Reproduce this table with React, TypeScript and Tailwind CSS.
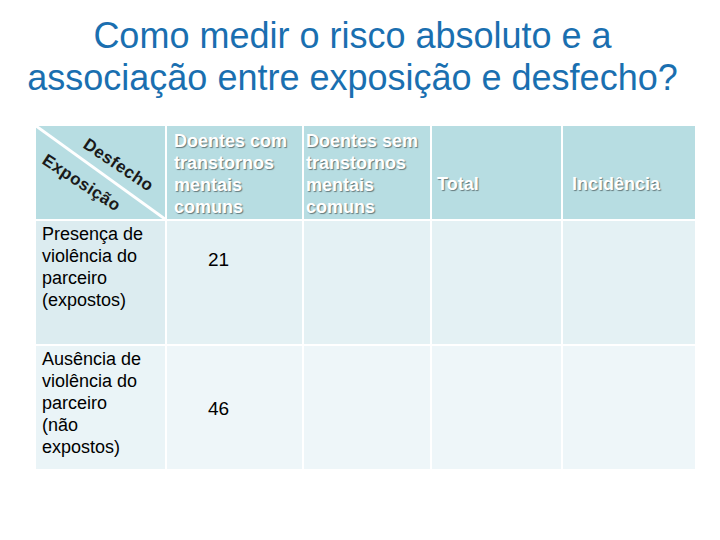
export default function App() {
  const head =
    "font-bold text-white leading-[22px] text-[18px] [text-shadow:1px_1px_1px_rgba(0,0,0,0.45)]";
  return (
    <div className="flex h-[540px] w-[720px] flex-col bg-white font-['Liberation_Sans',Arial,sans-serif]">
      <h1 className="pr-[15px] pt-[15px] text-center text-[36px] leading-[42px] text-[#1a6fb0]">
        Como medir o risco absoluto e a
        <br />
        associação entre exposição e desfecho?
      </h1>

      <div className="ml-[36px] mt-[27px] grid w-[659px] grid-cols-[129px_135px_126px_129px_132px] grid-rows-[93px_123px_123px] gap-[2px]">
        {/* diagonal corner cell */}
        <div className="relative overflow-hidden bg-[#b7dde2]">
          <svg className="absolute inset-0" width="129" height="93" viewBox="0 0 129 93">
            <line x1="0" y1="0" x2="129" y2="93" stroke="white" strokeWidth="3" />
          </svg>
          <span className="absolute left-[49px] top-[8px] origin-left rotate-[34deg] text-[17px] font-bold leading-none tracking-[0.5px] text-[#1a1a1a]">
            Desfecho
          </span>
          <span className="absolute left-[8px] top-[24px] origin-left rotate-[33deg] text-[17px] font-bold leading-none tracking-[0.5px] text-[#1a1a1a]">
            Exposição
          </span>
        </div>
        <div className={`bg-[#b7dde2] pl-[7px] pt-[4px] ${head}`}>
          Doentes com
          <br />
          transtornos
          <br />
          mentais
          <br />
          comuns
        </div>
        <div className={`bg-[#b7dde2] pl-[2px] pt-[4px] ${head}`}>
          Doentes sem
          <br />
          transtornos
          <br />
          mentais
          <br />
          comuns
        </div>
        <div className={`bg-[#b7dde2] pl-[5px] pt-[47px] ${head}`}>Total</div>
        <div className={`bg-[#b7dde2] pl-[9px] pt-[47px] ${head}`}>Incidência</div>

        {/* row 1 */}
        <div className="bg-[#dcecf0] pl-[6px] pt-[2px] text-[18px] leading-[22px] text-black">
          Presença de
          <br />
          violência do
          <br />
          parceiro
          <br />
          (expostos)
        </div>
        <div className="bg-[#e4f1f4] pl-[41px] pt-[28px] text-[19px] leading-[22px] text-black">21</div>
        <div className="bg-[#e4f1f4]" />
        <div className="bg-[#e4f1f4]" />
        <div className="bg-[#e4f1f4]" />

        {/* row 2 */}
        <div className="bg-[#eaf4f7] pl-[6px] pt-[2px] text-[18px] leading-[22px] text-black">
          Ausência de
          <br />
          violência do
          <br />
          parceiro
          <br />
          (não
          <br />
          expostos)
        </div>
        <div className="bg-[#eef6f9] pl-[41px] pt-[52px] text-[19px] leading-[22px] text-black">46</div>
        <div className="bg-[#eef6f9]" />
        <div className="bg-[#eef6f9]" />
        <div className="bg-[#eef6f9]" />
      </div>
    </div>
  );
}
